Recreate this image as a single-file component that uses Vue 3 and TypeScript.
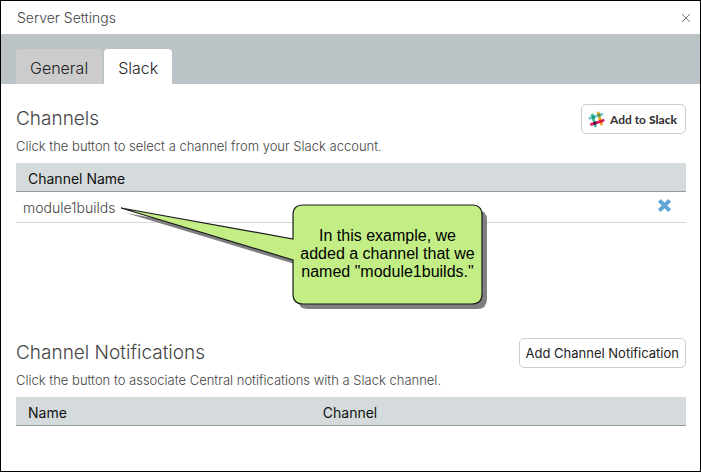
<script setup lang="ts">
import { ref } from 'vue'

type Tab = 'General' | 'Slack'

const tabs: Tab[] = ['General', 'Slack']
const activeTab = ref<Tab>('Slack')
const channels = ref<string[]>(['module1builds'])

function removeChannel(name: string) {
  channels.value = channels.value.filter((channel) => channel !== name)
}
</script>

<template>
  <main class="dialog">
    <header class="titlebar">
      <h1 class="title">Server Settings</h1>
      <button class="close" type="button" aria-label="Close">
        <svg width="10" height="10" viewBox="0 0 10 10" aria-hidden="true">
          <path d="M1 1L9 9M9 1L1 9" fill="none" stroke="#777" stroke-width="1" />
        </svg>
      </button>
    </header>

    <nav class="tabs">
      <button
        v-for="tab in tabs"
        :key="tab"
        type="button"
        class="tab"
        :class="{ active: tab === activeTab }"
        @click="activeTab = tab"
      >{{ tab }}</button>
    </nav>

    <div class="content">
      <section class="section channels">
        <div class="section-head">
          <h2 class="heading">Channels</h2>
          <button class="button slack-button" type="button">
            <svg class="slack-logo" width="17" height="17" viewBox="0 0 17 17" aria-hidden="true">
              <g fill="none" stroke-width="2.8" stroke-linecap="round">
                <path d="M10.2 2L13.4 13.2" stroke="#e9a820" />
                <path d="M2 7.2L13.8 3.3" stroke="#70cadb" />
                <path d="M4.3 4L7.4 14.8" stroke="#3eb890" />
                <path d="M3.4 13.3L15.2 9.5" stroke="#e01563" />
              </g>
              <path d="M3.7 5.2L6.2 4.4L7 7L4.5 7.8Z" fill="#1a937d" />
              <path d="M9.5 3.3L12 2.5L12.8 5.1L10.3 5.9Z" fill="#6b8b39" />
              <path d="M5.4 11.2L7.9 10.4L8.7 13L6.2 13.8Z" fill="#331433" />
              <path d="M11.2 9.4L13.7 8.6L14.5 11.2L12 12Z" fill="#d62027" />
            </svg>
            <span>Add to <strong>Slack</strong></span>
          </button>
        </div>
        <p class="description">Click the button to select a channel from your Slack account.</p>
        <table class="table">
          <thead>
            <tr><th scope="col" colspan="2">Channel Name</th></tr>
          </thead>
          <tbody>
            <tr v-for="channel in channels" :key="channel">
              <td>{{ channel }}</td>
              <td class="action">
                <button
                  class="remove"
                  type="button"
                  :aria-label="`Remove ${channel}`"
                  @click="removeChannel(channel)"
                >
                  <svg width="15" height="15" viewBox="0 0 15 15" aria-hidden="true">
                    <path d="M2.3 2.3L12.7 12.7M12.7 2.3L2.3 12.7" fill="none" stroke="#5fa6d6" stroke-width="4" />
                  </svg>
                </button>
              </td>
            </tr>
          </tbody>
        </table>

        <aside class="callout">
          <svg class="callout-shape" width="368" height="106" viewBox="0 0 368 106" aria-hidden="true">
            <path
              transform="translate(5 5)"
              fill="#808080"
              d="M1 4L173 35V11Q173 1 183 1H352Q362 1 362 11V90Q362 100 352 100H183Q173 100 173 90V56Z"
            />
            <path
              fill="#c3ee86"
              stroke="#1c1c1c"
              stroke-width="1.2"
              d="M1 4L173 35V11Q173 1 183 1H352Q362 1 362 11V90Q362 100 352 100H183Q173 100 173 90V56Z"
            />
          </svg>
          <p class="callout-text">In this example, we<br />added a channel that we<br />named "module1builds."</p>
        </aside>
      </section>

      <section class="section">
        <div class="section-head">
          <h2 class="heading">Channel Notifications</h2>
          <button class="button" type="button">Add Channel Notification</button>
        </div>
        <p class="description">Click the button to associate Central notifications with a Slack channel.</p>
        <table class="table">
          <thead>
            <tr>
              <th class="name-column" scope="col">Name</th>
              <th scope="col">Channel</th>
            </tr>
          </thead>
        </table>
      </section>
    </div>
  </main>
</template>

<style>
body {
  margin: 0;
  background: #fff;
}
</style>

<style scoped>
.dialog {
  box-sizing: border-box;
  min-height: 100vh;
  border: 1px solid #000;
  background: #fff;
  color: #444;
  font-family: Inter, "Liberation Sans", sans-serif;
  font-weight: 300;
}

.dialog * {
  box-sizing: border-box;
}

button {
  margin: 0;
  font: inherit;
  cursor: pointer;
}

.titlebar {
  display: flex;
  align-items: center;
  justify-content: space-between;
  height: 33px;
  padding: 0 9px 0 16px;
}

.title {
  margin: 0;
  font-size: 14px;
  font-weight: 300;
  line-height: 20px;
}

.close,
.remove {
  display: flex;
  padding: 0;
  border: 0;
  background: none;
}

.tabs {
  display: flex;
  align-items: flex-end;
  gap: 2px;
  height: 50px;
  padding: 0 15px;
  background: #bbc3c6;
}

.tab {
  height: 35px;
  padding: 2px 14px 0;
  border: 0;
  border-radius: 4px 4px 0 0;
  background: #ccc;
  color: #222;
  font-size: 16px;
}

.tab.active {
  background: #fff;
}

.content {
  padding: 20px 14px 0 15px;
}

.channels {
  position: relative;
  min-height: 234px;
}

.section-head {
  display: flex;
  align-items: center;
  justify-content: space-between;
  height: 30px;
}

.heading {
  margin: 0;
  font-size: 19px;
  font-weight: 300;
  line-height: 24px;
}

.button {
  height: 30px;
  padding: 0 6px;
  border: 1px solid #ccc;
  border-radius: 5px;
  background: #fff;
  color: #222;
  font-size: 13px;
  font-weight: 400;
}

.slack-button {
  display: flex;
  align-items: center;
  gap: 5px;
  padding: 0 8px 0 6px;
  color: #333;
  font-family: Lato, sans-serif;
  font-size: 12px;
  font-weight: 700;
}

.slack-button strong {
  font-weight: 900;
}

.description {
  margin: 4px 0 9px;
  font-size: 13px;
  line-height: 16px;
}

.table {
  width: 100%;
  border-spacing: 0;
  border-collapse: separate;
  table-layout: fixed;
  font-size: 14px;
}

th {
  height: 29px;
  padding: 2px 12px 0;
  border-bottom: 1px solid #8f9a9e;
  background: #d5dadc;
  color: #111;
  font-weight: 400;
  text-align: left;
}

td {
  height: 31px;
  padding: 0 7px;
  border-bottom: 1px solid #d8d8d8;
}

.action {
  padding: 0 14px 4px;
}

.remove {
  margin-left: auto;
}

.name-column {
  width: 44%;
}

.callout {
  position: absolute;
  top: 100px;
  left: 104px;
  width: 368px;
  height: 106px;
}

.callout-shape {
  display: block;
}

.callout-text {
  position: absolute;
  top: 23px;
  left: 173px;
  width: 189px;
  margin: 0;
  color: #000;
  font-family: "Liberation Sans", Arial, sans-serif;
  font-size: 16px;
  font-weight: 400;
  line-height: 18px;
  text-align: center;
}
</style>
